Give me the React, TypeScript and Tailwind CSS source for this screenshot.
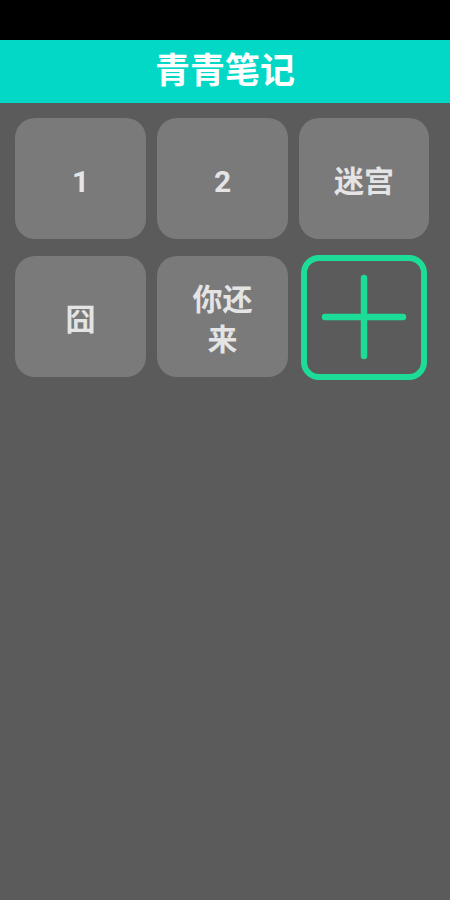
import React from "react";

const font = 'Roboto, "Noto Sans CJK SC", "Noto Sans", sans-serif';

function Tile({ label }: { label: string }) {
  return (
    <div className="h-[121px] rounded-[20px] bg-[#7a7a7a] flex items-center justify-center">
      <div className="max-w-[64px] pt-[7px] text-center text-[30px] leading-[40px] font-bold text-[#e4e4e4]">{label}</div>
    </div>
  );
}

export default function App() {
  return (
    <div className="w-[450px] h-[900px] bg-[#5b5b5b] flex flex-col" style={{ fontFamily: font }}>
      <div className="h-[40px] bg-black" />
      <div className="h-[63px] bg-[#03d8c6] flex items-center justify-center">
        <span className="text-[35px] font-bold text-white leading-none">青青笔记</span>
      </div>
      <div className="pt-[15px] pl-[15px] grid grid-cols-[131px_131px_130px] gap-x-[11px] gap-y-[17px]">
        <Tile label="1" />
        <Tile label="2" />
        <Tile label="迷宫" />
        <Tile label="囧" />
        <Tile label="你还来" />
        <div className="h-[125px] mx-[2px] my-[-1px] rounded-[18px] border-[6px] border-[#1ddc97] flex">
          <svg viewBox="0 0 114 113" className="w-full h-full">
            <line x1="18" y1="56" x2="96" y2="56" stroke="#1ddc97" strokeWidth="6.5" strokeLinecap="round" />
            <line x1="57" y1="17" x2="57" y2="95" stroke="#1ddc97" strokeWidth="6.5" strokeLinecap="round" />
          </svg>
        </div>
      </div>
    </div>
  );
}
